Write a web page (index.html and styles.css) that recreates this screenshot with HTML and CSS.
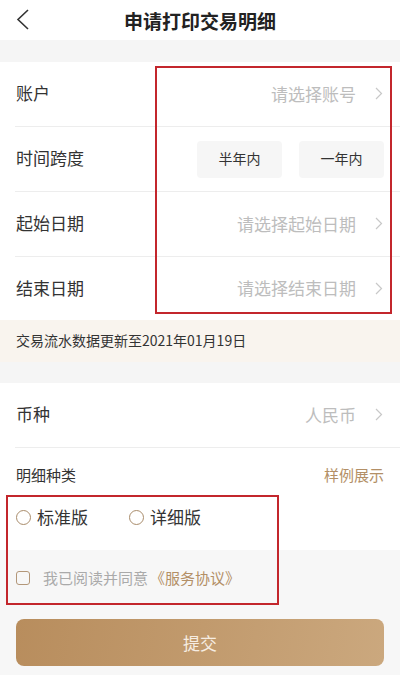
FILE: index.html
```html
<!DOCTYPE html>
<html lang="zh">
<head>
<meta charset="utf-8">
<link rel="stylesheet" href="styles.css">
</head>
<body>
<div class="page">
  <header class="header">
    <svg class="back" width="14" height="22" viewBox="0 0 14 22"><polyline points="12,1 2,10.5 12,20" fill="none" stroke="#333" stroke-width="1.6"/></svg>
    <h1 class="title">申请打印交易明细</h1>
  </header>
  <div class="gap"></div>
  <section class="card card-top">
    <div class="row"><span class="label">账户</span><span class="value">请选择账号<svg class="chev" width="8" height="13" viewBox="0 0 8 13"><polyline points="1,1 6.5,6.5 1,12" fill="none" stroke="#c8c8c8" stroke-width="1.2"/></svg></span></div>
    <div class="row"><span class="label">时间跨度</span><span class="btns"><span class="pill">半年内</span><span class="pill">一年内</span></span></div>
    <div class="row"><span class="label">起始日期</span><span class="value">请选择起始日期<svg class="chev" width="8" height="13" viewBox="0 0 8 13"><polyline points="1,1 6.5,6.5 1,12" fill="none" stroke="#c8c8c8" stroke-width="1.2"/></svg></span></div>
    <div class="row row-last"><span class="label">结束日期</span><span class="value">请选择结束日期<svg class="chev" width="8" height="13" viewBox="0 0 8 13"><polyline points="1,1 6.5,6.5 1,12" fill="none" stroke="#c8c8c8" stroke-width="1.2"/></svg></span></div>
    <div class="mark mark-1"></div>
  </section>
  <div class="notice">交易流水数据更新至2021年01月19日</div>
  <div class="gap gap-2"></div>
  <section class="card card-bottom">
    <div class="row"><span class="label">币种</span><span class="value">人民币<svg class="chev" width="8" height="13" viewBox="0 0 8 13"><polyline points="1,1 6.5,6.5 1,12" fill="none" stroke="#c8c8c8" stroke-width="1.2"/></svg></span></div>
    <div class="kind"><span class="kind-label">明细种类</span><span class="link">样例展示</span></div>
    <div class="radios">
      <span class="radio"><span class="circle"></span>标准版</span>
      <span class="radio"><span class="circle"></span>详细版</span>
    </div>
  </section>
  <div class="footer">
    <div class="agree"><span class="box"></span><span class="agree-text">我已阅读并同意</span><span class="link agree-link">《服务协议》</span></div>
    <div class="submit">提交</div>
    <div class="mark mark-2"></div>
  </div>
</div>
</body>
</html>
```
FILE: styles.css
```css
* { box-sizing: border-box; margin: 0; padding: 0; }
html, body { width: 400px; height: 675px; overflow: hidden; }
body { background: #f7f7f7; font-family: "Noto Sans CJK SC", "Noto Sans", sans-serif; color: #333; line-height: 1.25; }
.page { position: relative; width: 400px; height: 675px; }
.header { position: relative; height: 40px; background: #fff; display: flex; align-items: center; justify-content: center; }
.back { position: absolute; left: 16px; top: 9px; }
.title { font-size: 19px; font-weight: 700; color: #222; line-height: 1; }
.gap { height: 22px; background: #f5f5f5; }
.gap-2 { height: 21px; }
.card { background: #fff; position: relative; }
.row { height: 65px; margin-left: 15px; padding-right: 16px; border-bottom: 1px solid #ededed; display: flex; align-items: center; justify-content: space-between; }
.row-last { height: 63px; border-bottom: none; }
.label { font-size: 17px; color: #333; padding-left: 1px; padding-bottom: 2px; }
.value { display: flex; align-items: center; font-size: 17px; color: #bdbdbd; padding-bottom: 1px; }
.chev { margin-left: 19px; margin-right: 1px; }
.btns { display: flex; gap: 17px; }
.pill { width: 85px; height: 37px; background: #f6f6f6; border-radius: 4px; display: flex; align-items: center; justify-content: center; font-size: 14px; color: #333; }
.notice { height: 42px; background: #f9f4ee; display: flex; align-items: center; padding-left: 16px; font-size: 14px; color: #333; }
.kind { display: flex; justify-content: space-between; align-items: center; padding: 16px 16px 0 16px; height: 38px; font-size: 15px; }
.kind-label { color: #333; }
.link { color: #b38f66; }
.radios { display: flex; align-items: center; padding: 19px 16px 21px 16px; height: 64px; }
.radio { display: flex; align-items: center; font-size: 17px; color: #333; width: 113px; }
.circle { width: 15px; height: 15px; border: 1.5px solid #a98c6b; border-radius: 50%; margin-right: 6px; flex: none; }
.footer { position: relative; padding: 0 16px; }
.agree { height: 56px; display: flex; align-items: center; font-size: 15px; }
.box { width: 14px; height: 14px; border: 1.5px solid #b39779; border-radius: 3px; margin-right: 13px; flex: none; }
.agree-text { color: #aaa; }
.agree-link { margin-left: 2px; }
.submit { margin-top: 13px; height: 47px; border-radius: 8px; background: linear-gradient(100deg, #b88d5d 0%, #c19a6d 50%, #cba87e 100%); display: flex; align-items: center; justify-content: center; font-size: 17px; color: #f6ede2; }
.mark { position: absolute; border: 2px solid #c3262c; pointer-events: none; }
.mark-1 { left: 155px; top: 4px; width: 237px; height: 248px; }
.mark-2 { left: 6px; top: -55px; width: 273px; height: 110px; }
```
